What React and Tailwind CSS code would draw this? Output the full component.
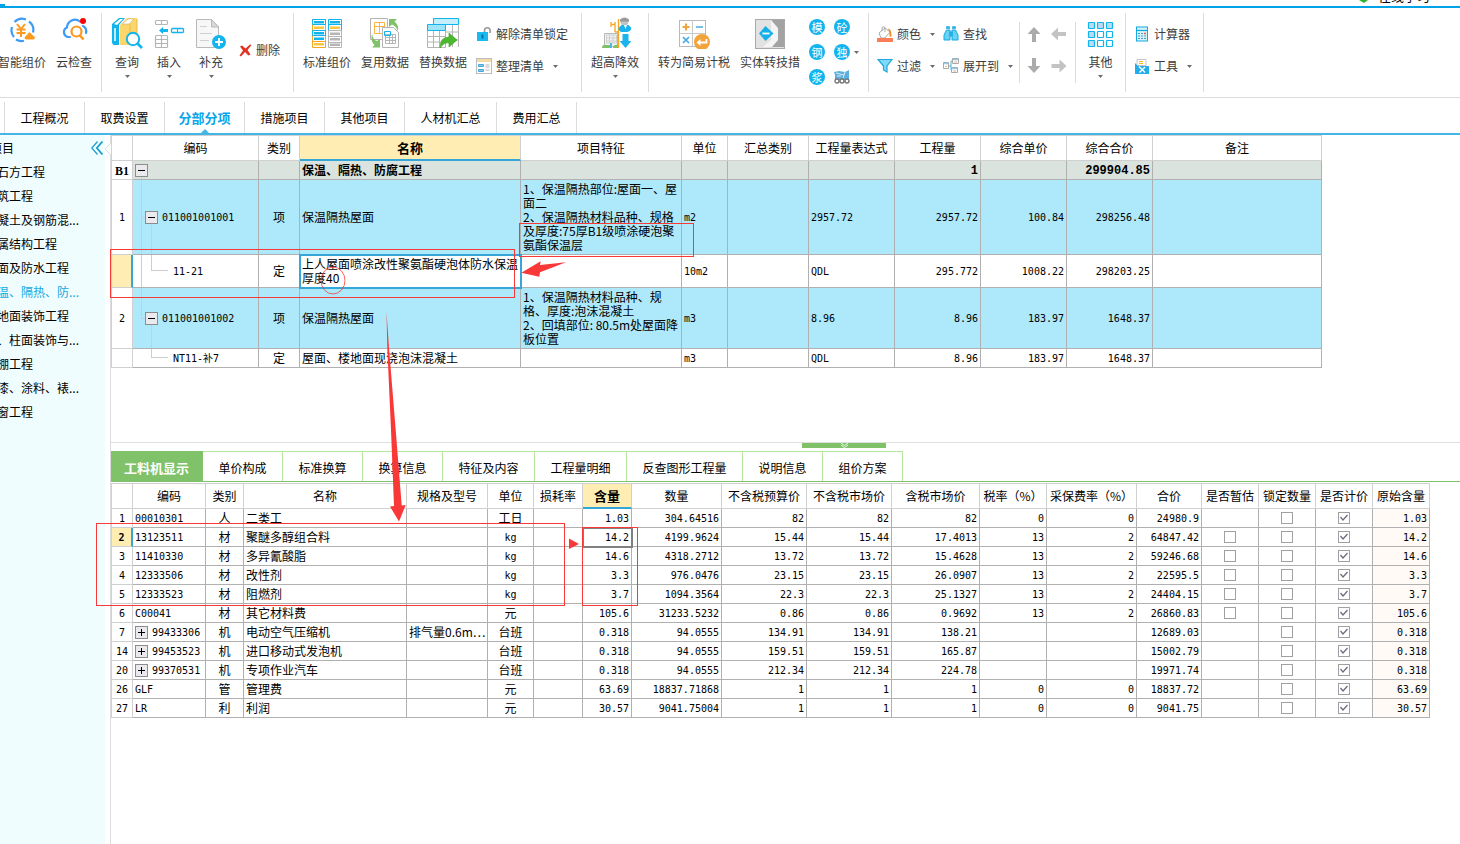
import React, { useState } from 'react';
import clsx from 'clsx';

const MONO = 'font-["DejaVu_Sans_Mono","Noto_Sans_CJK_SC",monospace] text-[10px]';

/* ---------- ribbon icons ---------- */

const Icon = ({ children, size = 32 }) => (
    <svg width={size} height={size} viewBox={`0 0 ${size} ${size}`} fill="none" aria-hidden="true" className="shrink-0">
        {children}
    </svg>
);

const SmartPriceIcon = () => (
    <Icon>
        <path d="M8 20a10.500 10.500 0 0 1-2-10M8.500 5A10.500 10.500 0 0 1 20 2.500M23 4.500a10.500 10.500 0 0 1 4 11M10 22.500a10 10 0 0 0 8 1.200" stroke="#3f9cf5" strokeWidth="2.200" />
        <path d="M11 7l4 5 4-5M15 12v8M10.500 12.500h9M10.500 16h9" stroke="#fb9a1c" strokeWidth="2" />
        <path d="M23.500 15l5.500 5.500q0 2-2 2h-6.500q-2 0-2-2z" fill="#fb9a1c" />
    </Icon>
);

const CloudCheckIcon = () => (
    <Icon>
        <path d="M12 20H10a5 5 0 0 1-1-9.500 8 8 0 0 1 13-6M25 9q4 2 3 7" stroke="#3f9cf5" strokeWidth="2.200" strokeLinecap="round" />
        <circle cx="18.500" cy="14.500" r="5" stroke="#fb9a1c" strokeWidth="2.200" />
        <path d="M22 18.500l3.500 4" stroke="#fb9a1c" strokeWidth="2.600" />
        <circle cx="25" cy="4" r="3" fill="#f00" />
    </Icon>
);

const QueryIcon = () => (
    <Icon>
        <path d="M1 7l7-6h6l-6 7v20H2.500L1 26z" fill="#12b4ee" />
        <path d="M3 7l6-5h3L6 8z" fill="#fff" />
        <path d="M4 11v13" stroke="#fff" strokeWidth="1.500" />
        <path d="M9 8l7-7h10v24l-4 3H9z" fill="#fbd66b" />
        <path d="M11 7l6-5h6l-5 5z" fill="#fff" stroke="#c9b27a" strokeWidth=".6" />
        <path d="M19 7v20M26 2v20" stroke="#e9bb45" />
        <circle cx="22" cy="22" r="6.200" fill="#fff" stroke="#12b4ee" strokeWidth="2" />
        <path d="M26.500 26.500l4.500 4.500" stroke="#12b4ee" strokeWidth="2.600" />
    </Icon>
);

const InsertIcon = () => (
    <Icon>
        <g stroke="#b5b5b5" strokeWidth="1.200">
            <rect x="2.500" y="3.500" width="12" height="4" rx="1" />
            <path d="M8.500 3.500v4" />
            <rect x="2.500" y="18.500" width="12" height="12" rx="1" />
            <path d="M8.500 18.500v12M2.500 22.500h12M2.500 26.500h12" />
        </g>
        <path d="M6 13.500l4-3.500v2h5v3h-5v2z" fill="#12b4ee" />
        <rect x="18.500" y="11.500" width="12" height="4" rx="1" stroke="#12b4ee" strokeWidth="1.300" />
        <path d="M24.500 11.500v4" stroke="#12b4ee" />
    </Icon>
);

const SupplementIcon = () => (
    <Icon>
        <path d="M1.500 2.500h15l7 7.500v20.500h-22z" fill="#f7f7f7" stroke="#b9b9b9" />
        <path d="M16.500 2.500v7.500h7z" fill="#d8d8d8" stroke="#b9b9b9" />
        <path d="M5 9.500h7M5 16.500h12M5 23.500h9" stroke="#d0d0d0" />
        <circle cx="24" cy="25" r="7" fill="#12b4ee" />
        <path d="M24 21v8M20 25h8" stroke="#fff" strokeWidth="2" />
    </Icon>
);

const DeleteIcon = () => (
    <Icon size={13}>
        <path d="M1 2.500l2-1 3.500 3 4.500-4 1.500.5L8.500 6l3 4.500-2 1L6 8l-4 4.500-1.500-1L4 6.500z" fill="#e0301f" />
    </Icon>
);

const StandardIcon = () => (
    <Icon>
        <path d="M1.500 2.500h13v28h-13zM1.500 7.500h13" stroke="#f5a623" />
        <path d="M1.500 24.500h13" stroke="#f5a623" />
        <path d="M1.500 2.500h13v5h-13zM1.500 13.500h13v5h-13zM17.500 2.500h13v11h-13zM17.500 7.500h13" stroke="#12b4ee" />
        <path d="M17.500 13.500h13v17h-13zM17.500 19.500h13M17.500 25.500h13" stroke="#b5b5b5" />
        <path d="M3 4h10v2.500H3zM19 4h10v2.500H19zM3 15h10v2.500H3zM3 20.500h10V23H3z" fill="#12b4ee" />
        <path d="M3 9.500h10V12H3zM3 26h10v2.500H3zM19 9.500h10V12H19z" fill="#fcc63f" />
        <path d="M19 15.500h10V18H19zM19 21h10v2.500H19zM19 26.500h10V29H19z" fill="#b5b5b5" />
    </Icon>
);

const ReuseIcon = () => (
    <Icon>
        <path d="M1.500 1.500h17v21h-17z" fill="#fff" stroke="#b5b5b5" />
        <path d="M5.500 5.500h10v11h-10zM5.500 9.500h10M10.500 5.500v11" stroke="#fcb53f" />
        <path d="M13.500 10.500h11l5 5v15h-16z" fill="#fff" stroke="#b5b5b5" />
        <path d="M16.500 17.500h10v9h-10zM16.500 20.500h10M16.500 23.500h10M20.500 17.500v9M23.500 17.500v9" stroke="#b5b5b5" />
        <path d="M15.500 14.500h6v4h-6z" stroke="#12b4ee" />
        <path d="M20 2h8l-2.500 2.500Q30 8 29 14q-2-5-6-6.500L20 10z" fill="#80c269" />
        <path d="M3 17q1 6 5 7l3-2v8.500H3L5.500 28Q1 24 3 17z" fill="#80c269" />
    </Icon>
);

const ReplaceIcon = () => (
    <Icon>
        <path d="M6.500 1.500h25v6h-25z" fill="#c5eefb" stroke="#12b4ee" />
        <path d="M31.500 8v22M18.500 15h13M18.500 23h13M25.500 8v22" stroke="#b5b5b5" />
        <path d="M.5 13.500h18v17H.5zM.5 19.500h18M.5 25h18M6.500 13.500v17M12.500 13.500v17" fill="#fff" stroke="#b5b5b5" />
        <path d="M.5 7.500h18v6H.5z" fill="#9fe3f8" stroke="#12b4ee" />
        <path d="M13 31q0-11 9-11v-4l8 7-8 7v-4q-5-1-9 5z" fill="#4bb82e" stroke="#3a9a22" strokeWidth=".6" />
    </Icon>
);

const UnlockIcon = () => (
    <Icon size={16}>
        <path d="M8.500 6V4.500a2.800 2.800 0 0 1 5.600 0V7" stroke="#9a9a9a" strokeWidth="1.600" />
        <rect x="1" y="6" width="11" height="9" fill="#19b9f2" />
        <path d="M6.500 8.500v4" stroke="#0a6c96" strokeWidth="1.800" />
    </Icon>
);

const ArrangeIcon = () => (
    <Icon size={16}>
        <rect x=".5" y=".5" width="15" height="15" fill="#fff" stroke="#bcbcbc" />
        <path d="M1 1h14v3H1z" fill="#f3dba6" />
        <path d="M2.500 6.500h5v2h-5zM2.500 11.500h5v2h-5z" fill="#7fc8ee" stroke="#49a9de" />
        <path d="M9.500 7h4M9.500 9h4M9.500 12h4" stroke="#b5b5b5" />
    </Icon>
);

const HeightIcon = () => (
    <Icon>
        <path d="M5.500 16.500h13v13h-13z" fill="#f2f2f2" stroke="#b9b9b9" />
        <path d="M7.500 18v8h10v-8zM7.500 21h10M7.500 24h10M10.500 18v8M14 18v8" stroke="#cfcfcf" />
        <path d="M3 31q0-4 5-3h3v3zM14 31q0-4 6-3v3z" fill="#80c269" />
        <path d="M12 26v5" stroke="#49b6e8" strokeWidth="2" />
        <path d="M12 5v5M16 5v5M12 7.500h4M19.500 2v29M16 15h4M16 15V9" stroke="#f5a623" strokeWidth="1.300" />
        <circle cx="25.500" cy="4.500" r="4" fill="#c2c2c2" />
        <path d="M21 2.500q4.500-3.500 9 0v2h-9z" fill="#999" />
        <path d="M19.500 11l3-3h7l3 3q0 3-4 4h-6q-3-1-3-4z" fill="#19b4ee" />
        <path d="M25 8l1.500 4L28 8z" fill="#fff" />
        <path d="M23.500 17h6v7h3L26.500 31l-6-7h3z" fill="#19b4ee" />
    </Icon>
);

const SimpleTaxIcon = () => (
    <Icon>
        <rect x="1.500" y="3.500" width="26" height="26" fill="#fff" stroke="#b9b9b9" />
        <path d="M14.500 3.500v26M1.500 16.500h26" stroke="#c9c9c9" />
        <path d="M8 6.500v7M4.500 10h7" stroke="#f2a33a" strokeWidth="2" />
        <path d="M18 10h7M5 20l6 6M11 20l-6 6" stroke="#49a9de" strokeWidth="1.700" />
        <circle cx="24" cy="25" r="8" fill="#f2a33a" />
        <path d="M28.500 22v3.500H21" stroke="#fff" strokeWidth="1.800" />
        <path d="M18.500 25.500l4-3.500v7z" fill="#fff" />
    </Icon>
);

const EntityIcon = () => (
    <Icon>
        <rect x="1.500" y="2.500" width="29" height="29" fill="#e2e2e2" stroke="#a9a9a9" />
        <path d="M17 3h13v27H17l6-7V12z" fill="#a3a3a3" />
        <path d="M17 3v20l-8 7h9l6-7V11z" fill="#f4f4f4" />
        <path d="M11.500 9l8 7.500-8 7.500-6.500-7.500z" fill="#14b0ec" />
        <path d="M8.500 16.500h7" stroke="#fff" strokeWidth="1.800" />
    </Icon>
);

const TruckIcon = () => (
    <Icon size={16}>
        <path d="M0 3l5-1 6 1 4-2v10H1V6z" fill="#5bb0e0" />
        <path d="M2 4l8 2M11 3l-2 6M3 7h4" stroke="#dcecf5" />
        <circle cx="3" cy="12" r="2" fill="#fff" stroke="#777" strokeWidth="1.400" />
        <circle cx="8" cy="12" r="2" fill="#fff" stroke="#777" strokeWidth="1.400" />
        <circle cx="13" cy="12" r="2" fill="#fff" stroke="#777" strokeWidth="1.400" />
    </Icon>
);

const BucketIcon = () => (
    <Icon size={16}>
        <path d="M2 7l6-5 5 4-5 6H4z" fill="#fff" stroke="#a9a9a9" />
        <path d="M5 5V1.500Q6.500 0 8 1.500V6" stroke="#a9a9a9" />
        <path d="M11 2.500q3.500 0 3.500 8-2 1-2-1V6z" fill="#f08c1a" />
        <path d="M0 12h16v4H0z" fill="#fa7d5a" />
    </Icon>
);

const FunnelIcon = () => (
    <Icon size={16}>
        <path d="M1 1.500h14L10 8v6l-3.500-2V8z" fill="#7fdaf8" stroke="#1ca9dc" strokeWidth="1.200" />
    </Icon>
);

const BinocularsIcon = () => (
    <Icon size={16}>
        <path d="M4 3V1h2v2M10 3V1h2v2" stroke="#12a8e0" strokeWidth="1.500" />
        <path d="M3.500 4h3.500v10H1V9zM12.500 4H9v10h6V9zM7 6h2v4H7z" fill="#66d2f5" stroke="#12a8e0" />
    </Icon>
);

const ExpandIcon = () => (
    <Icon size={16}>
        <path d="M6 8h2V3h1M8 8v4h1" stroke="#49b6e8" />
        <g fill="#fff" stroke="#a9a9a9">
            <path d="M.5 4.500h5v6h-5zM9.500.5h6v5h-6zM8.500 9.500h6v5h-6z" />
        </g>
        <path d="M1 5.500h4M10 1.500h5M9 10.500h5" stroke="#8fcbe8" strokeWidth="1.500" />
        <path d="M2 8.500h2M11 4h3M10 13h3" stroke="#e9b58a" />
    </Icon>
);

const ArrowIcon = ({ dir }) => {
    const paths = {
        up: 'M8 1l6.500 7H10v8H6V8H1.500z',
        down: 'M8 15l6.500-7H10V0H6v8H1.500z',
        left: 'M0 8l7-6.500V6h8v4H7v4.500z',
        right: 'M15.500 8l-7-6.500V6H.5v4h8v4.500z',
    };
    return (
        <Icon size={16}>
            <path d={paths[dir]} fill={dir === 'up' || dir === 'down' ? '#ababab' : '#c3c3c3'} />
        </Icon>
    );
};

const OtherIcon = () => (
    <Icon>
        {[0, 1, 2].map((r) => [0, 1, 2].map((c) => (
            <rect key={`${r}${c}`} x={3.5 + c * 9} y={5.5 + r * 9} width="6" height="6" rx=".5"
                fill={r === 0 || c === 0 ? '#b9dcf0' : '#fff'} stroke="#12b4ee" strokeWidth="1.200" />
        )))}
    </Icon>
);

const CalculatorIcon = () => (
    <Icon size={16}>
        <rect x="2.500" y="1" width="11" height="14" fill="#d7f1fb" stroke="#12a8e0" />
        <path d="M3 4.500h10" stroke="#12a8e0" strokeWidth="1.200" />
        <path d="M4 7.500h2M7 7.500h2M4 10h2M7 10h2M10 10h2M4 12.500h2M7 12.500h2M10 12.500h2" stroke="#4d9cc7" />
        <path d="M10 7.500h2" stroke="#f0613a" strokeWidth="1.500" />
    </Icon>
);

const ToolsIcon = () => (
    <Icon size={16}>
        <path d="M3 1.500h9v6H3z" fill="#fff" stroke="#c5c5c5" />
        <path d="M5 3.500h4M5 5.500h4" stroke="#f5b623" />
        <path d="M1 5l3 3h11v8H1z" fill="#22aeea" />
        <path d="M5 8.500l6 6M11 9l-5.500 5.500" stroke="#fff" strokeWidth="1.400" />
    </Icon>
);

const Caret = () => (
    <svg width="5" height="3" viewBox="0 0 5 3" aria-hidden="true" className="shrink-0">
        <path d="M0 0h5L2.500 3z" fill="#6b6b78" />
    </svg>
);

/* ---------- ribbon ---------- */

const BigButton = ({ icon, label, caret, className }) => (
    <button className={clsx('flex h-[76px] shrink-0 flex-col items-center pt-[9px]', className)}>
        {icon}
        <span className="mt-[5px] leading-4 whitespace-nowrap">{label}</span>
        {caret && <span className="mt-[5px] flex"><Caret /></span>}
    </button>
);

const SmallButton = ({ icon, label, caret }) => (
    <button className="flex h-8 items-center gap-1 whitespace-nowrap">
        {icon}
        <span className="leading-4">{label}</span>
        {caret && <span className="ml-[5px] flex"><Caret /></span>}
    </button>
);

const Divider = ({ short }) => (
    <div className={clsx('w-px shrink-0 bg-[#dcdcdc]', short ? 'mt-[14px] h-[61px]' : 'mt-[5px] h-[79px]')} />
);

const Badge = ({ children }) => (
    <button className="flex h-4 w-4 items-center justify-center rounded-full bg-[#12b4ee] text-[11px] leading-none text-white">
        {children}
    </button>
);

function Ribbon() {
    return (
        <div className="flex h-[90px] items-start overflow-hidden border-b border-[#dcdcdc] text-[#3c3c3c]">
            <div className="flex shrink-0 pr-[3px]">
                <BigButton icon={<SmartPriceIcon />} label="智能组价" className="-ml-1.5 w-14" />
                <BigButton icon={<CloudCheckIcon />} label="云检查" className="w-12" />
            </div>
            <Divider />
            <div className="flex w-[191px] shrink-0 pl-1">
                <BigButton icon={<QueryIcon />} label="查询" caret className="w-[42px]" />
                <BigButton icon={<InsertIcon />} label="插入" caret className="w-[42px]" />
                <BigButton icon={<SupplementIcon />} label="补充" caret className="w-[42px]" />
                <div className="flex flex-col pt-[26px] pl-[7px]">
                    <SmallButton icon={<DeleteIcon />} label="删除" />
                </div>
            </div>
            <Divider />
            <div className="flex w-[287px] shrink-0 pl-1">
                <BigButton icon={<StandardIcon />} label="标准组价" className="w-[58px]" />
                <BigButton icon={<ReuseIcon />} label="复用数据" className="w-[58px]" />
                <BigButton icon={<ReplaceIcon />} label="替换数据" className="w-[58px]" />
                <div className="flex flex-col items-start pt-[10px] pl-1">
                    <SmallButton icon={<UnlockIcon />} label="解除清单锁定" />
                    <SmallButton icon={<ArrangeIcon />} label="整理清单" caret />
                </div>
            </div>
            <Divider />
            <div className="flex w-[66px] shrink-0 pl-1">
                <BigButton icon={<HeightIcon />} label="超高降效" caret className="w-[58px]" />
            </div>
            <Divider />
            <div className="flex w-[219px] shrink-0 pl-1">
                <BigButton icon={<SimpleTaxIcon />} label="转为简易计税" className="w-[82px]" />
                <BigButton icon={<EntityIcon />} label="实体转技措" className="w-[70px]" />
                <div className="mt-[11px] ml-1 grid h-[66px] grid-cols-2 content-between gap-x-[9px]">
                    <Badge>模</Badge>
                    <Badge>砼</Badge>
                    <Badge>钢</Badge>
                    <Badge>独</Badge>
                    <Badge>浆</Badge>
                    <button aria-label="泵送"><TruckIcon /></button>
                </div>
                <span className="mt-[43px] ml-1 flex self-start"><Caret /></span>
            </div>
            <Divider />
            <div className="flex w-[150px] shrink-0 pt-[10px] pl-2">
                <div className="flex w-[66px] flex-col items-start">
                    <SmallButton icon={<BucketIcon />} label="颜色" caret />
                    <SmallButton icon={<FunnelIcon />} label="过滤" caret />
                </div>
                <div className="flex flex-col items-start">
                    <SmallButton icon={<BinocularsIcon />} label="查找" />
                    <SmallButton icon={<ExpandIcon />} label="展开到" caret />
                </div>
            </div>
            <Divider short />
            <div className="grid w-[55px] shrink-0 grid-cols-2 gap-x-[9px] pt-[10px] pr-2 pl-1.5">
                {['up', 'left', 'down', 'right'].map((dir) => (
                    <button key={dir} aria-label={dir} className="flex h-8 items-center">
                        <ArrowIcon dir={dir} />
                    </button>
                ))}
            </div>
            <Divider short />
            <BigButton icon={<OtherIcon />} label="其他" caret className="w-[49px]" />
            <Divider />
            <div className="flex w-[77px] shrink-0 flex-col items-start pt-[10px] pl-2">
                <SmallButton icon={<CalculatorIcon />} label="计算器" />
                <SmallButton icon={<ToolsIcon />} label="工具" caret />
            </div>
            <Divider />
        </div>
    );
}

/* ---------- section tabs and sidebar ---------- */

const sections = [
    { name: '工程概况', w: 'w-20' },
    { name: '取费设置', w: 'w-20' },
    { name: '分部分项', w: 'w-20' },
    { name: '措施项目', w: 'w-20' },
    { name: '其他项目', w: 'w-20' },
    { name: '人材机汇总', w: 'w-[92px]' },
    { name: '费用汇总', w: 'w-20' },
];

function SectionTabs() {
    const [active, setActive] = useState('分部分项');
    return (
        <nav className="flex border-b-2 border-[#43b5e6] pt-1 pl-1">
            <div className="flex border-l border-[#dcdcdc]">
                {sections.map((s) => (
                    <button
                        key={s.name}
                        onClick={() => setActive(s.name)}
                        className={clsx(
                            'relative h-[31px] border-r border-[#dcdcdc]',
                            s.w,
                            active === s.name ? 'text-[13px] font-bold text-[#0aa5ea]' : 'text-black',
                        )}
                    >
                        {s.name}
                        {active === s.name && (
                            <svg width="8" height="4" viewBox="0 0 8 4" className="absolute bottom-0 left-1/2 -translate-x-1/2">
                                <path d="M0 4l4-4 4 4z" fill="#43b5e6" />
                            </svg>
                        )}
                    </button>
                ))}
            </div>
        </nav>
    );
}

const chapters = [
    '石方工程',
    '筑工程',
    '凝土及钢筋混...',
    '属结构工程',
    '面及防水工程',
    '温、隔热、防...',
    '地面装饰工程',
    '、柱面装饰与...',
    '棚工程',
    '漆、涂料、裱...',
    '窗工程',
];

function Sidebar() {
    return (
        <aside className="relative w-[105px] shrink-0 bg-[#f0fdff] pt-px text-black">
            <div className="flex h-6 items-center justify-between overflow-hidden pr-0.5">
                <span className="-ml-[10px]">项目</span>
                <button aria-label="收起">
                    <svg width="12" height="14" viewBox="0 0 12 14" fill="none" stroke="#1a9fcb" className="block">
                        <path d="M6.500.5L.8 7l5.700 6.500" strokeWidth="1.200" />
                        <path d="M11.500.5L5.800 7l5.700 6.500" strokeWidth="1.800" />
                    </svg>
                </button>
            </div>
            <ul className="overflow-hidden">
                {chapters.map((c) => (
                    <li key={c} className={clsx('-ml-[3px] h-6 leading-6 whitespace-nowrap', c.startsWith('温') && 'text-[#12a8e0]')}>
                        {c}
                    </li>
                ))}
            </ul>
            <svg width="7" height="14" viewBox="0 0 7 14" className="absolute top-[7px] -right-[6px]">
                <path d="M7 1L1 7l6 6" fill="#fff" stroke="#dcdcdc" />
            </svg>
        </aside>
    );
}

/* ---------- grids ---------- */

const alignClass = {
    left: 'text-left pl-0.5',
    center: 'text-center',
    right: 'text-right pr-0.5',
};

const isPlain = (v) => /^[\x20-\x7e]*$/.test(v);

const TreeBox = ({ open }) => (
    <button
        aria-label={open ? '折叠' : '展开'}
        className="flex h-[13px] w-[13px] shrink-0 items-center justify-center border border-[#8c8c8c] bg-[#e9e9ee]"
    >
        <svg width="9" height="9" viewBox="0 0 9 9" stroke="#000">
            <path d={open ? 'M1 4.500h7' : 'M1 4.500h7M4.500 1v7'} />
        </svg>
    </button>
);

function Head({ columns, active }) {
    return (
        <>
            <colgroup>
                {columns.map((c, i) => <col key={i} className={c.w} />)}
            </colgroup>
            <thead>
                <tr className="h-[26px]">
                    {columns.map((c, i) => (
                        <th
                            key={i}
                            className={clsx(
                                'border-t border-r border-b border-t-[#d0d0d0] border-r-[#d0d0d0] p-0 whitespace-nowrap first:border-l first:border-l-[#d0d0d0]',
                                c.name === active
                                    ? 'border-b-2 border-b-[#36a5d8] bg-[#ffedb3] text-[13px] font-bold'
                                    : 'border-b-[#d0d0d0] font-normal',
                            )}
                        >
                            {c.name}
                        </th>
                    ))}
                </tr>
            </thead>
        </>
    );
}

const billColumns = [
    { name: '', w: 'w-[22px]' },
    { name: '编码', w: 'w-[126px]' },
    { name: '类别', w: 'w-[41px]', align: 'center' },
    { name: '名称', w: 'w-[221px]', align: 'left' },
    { name: '项目特征', w: 'w-[161px]', align: 'left' },
    { name: '单位', w: 'w-[46px]', align: 'left' },
    { name: '汇总类别', w: 'w-[81px]', align: 'left' },
    { name: '工程量表达式', w: 'w-[86px]', align: 'left' },
    { name: '工程量', w: 'w-[86px]', align: 'right' },
    { name: '综合单价', w: 'w-[86px]', align: 'right' },
    { name: '综合合价', w: 'w-[86px]', align: 'right' },
    { name: '备注', w: 'w-[169px]', align: 'left' },
];

const billRows = [
    {
        no: 'B1', code: '', level: 0, h: 'h-[19px]', bg: 'bg-[#dae3de] font-bold',
        cells: ['', '保温、隔热、防腐工程', '', '', '', '', '1', '', '299904.85', ''],
    },
    {
        no: '1', code: '011001001001', level: 1, h: 'h-[75px]', bg: 'bg-[#aee8fb]',
        cells: ['项', '保温隔热屋面', '1、保温隔热部位:屋面一、屋\n面二\n2、保温隔热材料品种、规格\n及厚度:75厚B1级喷涂硬泡聚\n氨酯保温层', 'm2', '', '2957.72', '2957.72', '100.84', '298256.48', ''],
    },
    {
        no: '', code: '11-21', level: 2, h: 'h-[33px]', bg: 'bg-white', active: true, through: true,
        cells: ['定', '上人屋面喷涂改性聚氨酯硬泡体防水保温\n厚度40', '', '10m2', '', 'QDL', '295.772', '1008.22', '298203.25', ''],
    },
    {
        no: '2', code: '011001001002', level: 1, h: 'h-[61px]', bg: 'bg-[#aee8fb]', last: true,
        cells: ['项', '保温隔热屋面', '1、保温隔热材料品种、规\n格、厚度:泡沫混凝土\n2、回填部位: 80.5m处屋面降\n板位置', 'm3', '', '8.96', '8.96', '183.97', '1648.37', ''],
    },
    {
        no: '', code: 'NT11-补7', level: 2, h: 'h-[19px]', bg: 'bg-white',
        cells: ['定', '屋面、楼地面现浇泡沫混凝土', '', 'm3', '', 'QDL', '8.96', '183.97', '1648.37', ''],
    },
];

const guide = 'absolute border-[#c9ced1]';

function CodeCell({ row }) {
    return (
        <td className="relative border-r border-b border-[#b0b0b0] p-0">
            {row.level === 0 && <span className={clsx(guide, 'bottom-0 left-2 h-1 border-l')} />}
            {row.level === 1 && (
                <>
                    <span className={clsx(guide, 'top-0 left-2 w-1 border-l', row.last ? 'h-1/2' : 'h-full')} />
                    <span className={clsx(guide, 'top-1/2 left-2 w-1 border-t')} />
                    <span className={clsx(guide, 'top-1/2 bottom-0 left-[18px] border-l')} />
                </>
            )}
            {row.level === 2 && (
                <>
                    {row.through && <span className={clsx(guide, 'top-0 left-2 h-full border-l')} />}
                    <span className={clsx(guide, 'top-0 left-[18px] h-1/2 w-[17px] border-b border-l')} />
                </>
            )}
            <div
                className={clsx(
                    'relative flex items-center gap-1',
                    row.level === 0 && 'pl-0.5',
                    row.level === 1 && 'pl-3',
                    row.level === 2 && 'pl-10',
                )}
            >
                {row.level < 2 && <TreeBox open />}
                {row.code && <span className={clsx(MONO, 'pt-0.5')}>{row.code}</span>}
            </div>
        </td>
    );
}

function BillGrid() {
    return (
        <table className="w-0 table-fixed border-separate border-spacing-0 leading-[14px] text-black">
            <Head columns={billColumns} active="名称" />
            <tbody>
                {billRows.map((row, i) => (
                    <tr key={i} className={clsx(row.h, row.bg)}>
                        <th
                            className={clsx(
                                'border-b border-l border-[#d0d0d0] px-0 pt-0.5 pb-0 text-center',
                                row.no === 'B1' ? 'font-["Liberation_Serif",serif] text-xs font-bold' : clsx(MONO, 'font-normal'),
                                row.active ? 'border-r-2 border-r-[#36a5d8] bg-[#ffedb3]' : 'border-r bg-white',
                            )}
                        >
                            {row.no}
                        </th>
                        <CodeCell row={row} />
                        {row.cells.map((v, j) => {
                            const col = billColumns[j + 2];
                            const selected = row.active && col.name === '名称';
                            return (
                                <td
                                    key={j}
                                    className={clsx(
                                        'border-r border-b border-[#b0b0b0] pb-0 whitespace-pre',
                                        alignClass[col.align],
                                        isPlain(v) ? 'pt-0.5' : 'pt-0',
                                        isPlain(v) && (row.level === 0 ? 'font-["Liberation_Mono",monospace] text-xs' : MONO),
                                        selected && 'outline-2 -outline-offset-1 outline-[#36a5d8]',
                                    )}
                                >
                                    {v}
                                </td>
                            );
                        })}
                    </tr>
                ))}
            </tbody>
        </table>
    );
}

const detailColumns = [
    { name: '', w: 'w-[22px]' },
    { name: '编码', w: 'w-[73px]', align: 'left' },
    { name: '类别', w: 'w-[38px]', align: 'center' },
    { name: '名称', w: 'w-[163px]', align: 'left' },
    { name: '规格及型号', w: 'w-[81px]', align: 'left' },
    { name: '单位', w: 'w-[46px]', align: 'center' },
    { name: '损耗率', w: 'w-[49px]', align: 'right' },
    { name: '含量', w: 'w-[49px]', align: 'right' },
    { name: '数量', w: 'w-[90px]', align: 'right' },
    { name: '不含税预算价', w: 'w-[85px]', align: 'right' },
    { name: '不含税市场价', w: 'w-[85px]', align: 'right' },
    { name: '含税市场价', w: 'w-[88px]', align: 'right' },
    { name: '税率（%）', w: 'w-[67px]', align: 'right' },
    { name: '采保费率（%）', w: 'w-[90px]', align: 'right' },
    { name: '合价', w: 'w-[65px]', align: 'right' },
    { name: '是否暂估', w: 'w-[57px]' },
    { name: '锁定数量', w: 'w-[57px]' },
    { name: '是否计价', w: 'w-[57px]' },
    { name: '原始含量', w: 'w-[57px]', align: 'right' },
];

const detailRows = [
    ['1', '00010301', '人', '二类工', '', '工日', '', '1.03', '304.64516', '82', '82', '82', '0', '0', '24980.9'],
    ['2', '13123511', '材', '聚醚多醇组合料', '', 'kg', '', '14.2', '4199.9624', '15.44', '15.44', '17.4013', '13', '2', '64847.42'],
    ['3', '11410330', '材', '多异氰酸脂', '', 'kg', '', '14.6', '4318.2712', '13.72', '13.72', '15.4628', '13', '2', '59246.68'],
    ['4', '12333506', '材', '改性剂', '', 'kg', '', '3.3', '976.0476', '23.15', '23.15', '26.0907', '13', '2', '22595.5'],
    ['5', '12333523', '材', '阻燃剂', '', 'kg', '', '3.7', '1094.3564', '22.3', '22.3', '25.1327', '13', '2', '24404.15'],
    ['6', 'C00041', '材', '其它材料费', '', '元', '', '105.6', '31233.5232', '0.86', '0.86', '0.9692', '13', '2', '26860.83'],
    ['7', '99433306', '机', '电动空气压缩机', '排气量0.6m…', '台班', '', '0.318', '94.0555', '134.91', '134.91', '138.21', '', '', '12689.03'],
    ['14', '99453523', '机', '进口移动式发泡机', '', '台班', '', '0.318', '94.0555', '159.51', '159.51', '165.87', '', '', '15002.79'],
    ['20', '99370531', '机', '专项作业汽车', '', '台班', '', '0.318', '94.0555', '212.34', '212.34', '224.78', '', '', '19971.74'],
    ['26', 'GLF', '管', '管理费', '', '元', '', '63.69', '18837.71868', '1', '1', '1', '0', '0', '18837.72'],
    ['27', 'LR', '利', '利润', '', '元', '', '30.57', '9041.75004', '1', '1', '1', '0', '0', '9041.75'],
];

const CheckCell = ({ label, checked, hidden }) => (
    <td className="border-r border-b border-[#b0b0b0] p-0">
        {!hidden && (
            <label className="relative mx-auto block h-3 w-3">
                <input
                    type="checkbox"
                    aria-label={label}
                    defaultChecked={checked}
                    className="peer block h-3 w-3 appearance-none border border-[#a0a0a0] bg-white"
                />
                <svg width="12" height="12" viewBox="0 0 12 12" fill="none" className="pointer-events-none absolute inset-0 hidden peer-checked:block">
                    <path d="M2.500 5l2.500 3 4.500-5" stroke="#6c6c80" strokeWidth="1.300" />
                </svg>
            </label>
        )}
    </td>
);

function DetailGrid() {
    return (
        <table className="w-0 table-fixed border-separate border-spacing-0 leading-[14px] text-black">
            <Head columns={detailColumns} active="含量" />
            <tbody>
                {detailRows.map(([no, ...cells]) => {
                    const active = no === '2';
                    return (
                        <tr key={no} className="h-[19px]">
                            <th
                                className={clsx(
                                    'border-b border-l border-[#d0d0d0] px-0 pt-0.5 pb-0 text-center',
                                    MONO,
                                    active ? 'border-r-2 border-r-[#36a5d8] bg-[#ffedb3] font-bold' : 'border-r font-normal',
                                )}
                            >
                                {no}
                            </th>
                            {cells.map((v, j) => {
                                const col = detailColumns[j + 1];
                                const expandable = j === 0 && cells[1] === '机';
                                return (
                                    <td
                                        key={j}
                                        className={clsx(
                                            'border-r border-b border-[#b0b0b0] pb-0 whitespace-nowrap',
                                            alignClass[col.align],
                                            isPlain(v) && MONO,
                                            isPlain(v) && !expandable ? 'pt-0.5' : 'pt-0',
                                            active && col.name === '含量' && 'outline-2 -outline-offset-1 outline-[#808080]',
                                        )}
                                    >
                                        {expandable ? (
                                            <span className="flex items-center gap-1">
                                                <TreeBox />
                                                <span className="pt-0.5">{v}</span>
                                            </span>
                                        ) : v}
                                    </td>
                                );
                            })}
                            <CheckCell label={`是否暂估 ${no}`} hidden={cells[1] !== '材'} />
                            <CheckCell label={`锁定数量 ${no}`} />
                            <CheckCell label={`是否计价 ${no}`} checked />
                            <td className={clsx('border-r border-b border-[#b0b0b0] bg-[#fffaf5] pt-0.5 pb-0', alignClass.right, MONO)}>
                                {cells[6]}
                            </td>
                        </tr>
                    );
                })}
            </tbody>
        </table>
    );
}

const detailTabs = [
    { name: '工料机显示', w: 'w-[92px]' },
    { name: '单价构成', w: 'w-20' },
    { name: '标准换算', w: 'w-20' },
    { name: '换算信息', w: 'w-20' },
    { name: '特征及内容', w: 'w-[92px]' },
    { name: '工程量明细', w: 'w-[92px]' },
    { name: '反查图形工程量', w: 'w-[116px]' },
    { name: '说明信息', w: 'w-20' },
    { name: '组价方案', w: 'w-20' },
];

function DetailTabs() {
    const [active, setActive] = useState('工料机显示');
    return (
        <div className="flex border-b border-[#80c269]">
            {detailTabs.map((t) => (
                <button
                    key={t.name}
                    onClick={() => setActive(t.name)}
                    className={clsx(
                        'h-[30px] border-t border-r pt-0.5 leading-4',
                        t.w,
                        active === t.name
                            ? 'border-[#80c269] bg-[#80c269] text-[13px] font-bold text-white'
                            : 'border-[#b3e59f] text-black',
                    )}
                >
                    {t.name}
                </button>
            ))}
        </div>
    );
}

// review marks drawn on top of the grids
const Marks = () => (
    <svg className="pointer-events-none absolute inset-0 h-full w-full" fill="none" stroke="#f93838" aria-hidden="true">
        <rect x="110.500" y="249.500" width="404" height="48" />
        <rect x="519.500" y="223.500" width="174" height="33" />
        <ellipse cx="333" cy="280.500" rx="12" ry="13.500" strokeWidth=".8" />
        <rect x="96.500" y="523.500" width="468" height="82" />
        <rect x="582.500" y="527.500" width="55" height="78" />
        <g fill="#f93838" stroke="none">
            <path d="M521.300 272.700L540.700 261.300L540 265L566 262.300L540 272.300L539.300 276.700Z" />
            <path d="M386.500 312L389 348L395.700 430L401.700 505.500L405.700 505L399 521.500L390 506.500L394 506L391 430L387.300 348Z" />
            <path d="M569 538.500L579 544L569 549Z" />
        </g>
    </svg>
);

export default function App() {
    return (
        <div className='relative flex min-h-screen flex-col overflow-hidden bg-white font-["Noto_Sans_CJK_SC","Liberation_Sans",sans-serif] text-xs'>
            <div className="flex h-2 items-end overflow-hidden border-b-2 border-[#00a2e8] pr-[30px] leading-[14px]">
                <span className="mr-auto h-0.5 w-[5px] bg-[#00a2e8]" />
                <a href="#study" className="flex items-end gap-2 pb-[3px] text-[13px] text-black">
                    <svg width="12" height="12" viewBox="0 0 12 12" className="shrink-0">
                        <path d="M1 5l4 3 5-4v5l-4 3-5-3z" fill="#2fb52f" />
                    </svg>
                    在线学习
                </a>
            </div>
            <Ribbon />
            <SectionTabs />
            <div className="flex flex-1">
                <Sidebar />
                <main className="ml-[5px] min-w-0 flex-1 border-l border-[#dcdcdc]">
                    <section className="h-[307px]">
                        <BillGrid />
                    </section>
                    <div className="h-[9px] border-t border-[#dfdfdf]">
                        <button aria-label="收起面板" className="ml-[691px] flex h-[5px] w-[84px] items-center justify-center bg-[#80c269]">
                            <svg width="9" height="5" viewBox="0 0 9 5" fill="none" stroke="#e5f5df">
                                <path d="M1 0l3.500 2.500L8 0M1 2l3.500 2.500L8 2" />
                            </svg>
                        </button>
                    </div>
                    <DetailTabs />
                    <div className="pt-px">
                        <DetailGrid />
                    </div>
                </main>
            </div>
            <Marks />
        </div>
    );
}
